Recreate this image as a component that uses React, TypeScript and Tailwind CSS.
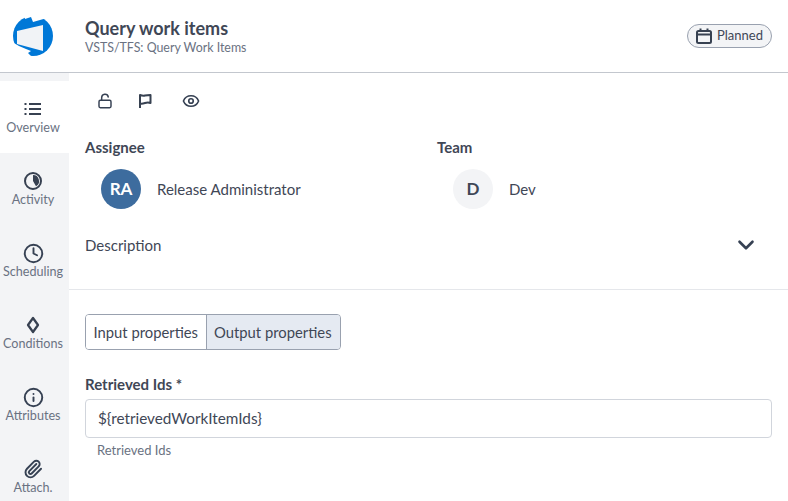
import { ChevronDown, Clock, Eye, Info, LockOpen, Paperclip } from "lucide-react";

const Logo = () => (
  <svg width="40" height="40" viewBox="0 0 40 40">
    <circle cx="20" cy="20" r="20" fill="#0078d7" />
    <path d="M-1 26 L6 30 L13 33 L18 35 L15 37 L19 41 L-1 41 Z" fill="#ffffff" />
    <path d="M11 -1 L12 3 L18 1 L20 6 L34 2 L34 -1 Z" fill="#ffffff" />
    <path d="M4 15 L30 9 L30 35 L4 28 Z" fill="#f1f3f6" />
  </svg>
);

const ListIcon = () => (
  <svg width="18" height="14" viewBox="0 0 18 14" fill="none" stroke="#374151" strokeWidth="2">
    <path d="M5 2 H17 M5 7 H17 M5 12 H17" />
    <path d="M0.5 2 H2.5 M0.5 7 H2.5 M0.5 12 H2.5" />
  </svg>
);

const PieClock = () => (
  <svg width="18" height="18" viewBox="0 0 18 18">
    <circle cx="9" cy="9" r="8" fill="none" stroke="#374151" strokeWidth="2" />
    <path d="M9 3 A6 6 0 0 1 12 14.2 L9 9 Z" fill="#374151" />
  </svg>
);

const Diamond = () => (
  <svg width="18" height="18" viewBox="0 0 18 18">
    <path d="M9 2 L14 9 L9 16 L4 9 Z" fill="none" stroke="#374151" strokeWidth="2.25" strokeLinejoin="round" />
  </svg>
);

const FlagIcon = () => (
  <svg width="14" height="16" viewBox="0 0 14 16" fill="none" stroke="#374151" strokeWidth="2" strokeLinejoin="round">
    <path d="M2 15 V2 Q5 3 7 2.5 T12.5 2 V10 Q10 9 7 10 T2 10.5" />
  </svg>
);

const CalendarIcon = () => (
  <svg width="16" height="16" viewBox="0 0 16 16" fill="none" stroke="#374151" strokeWidth="2">
    <rect x="1" y="3" width="14" height="12" rx="1.5" />
    <path d="M1 6.5 H15" />
    <path d="M4.5 0.5 V3 M11.5 0.5 V3" />
  </svg>
);

const tabs = [
  { label: "Overview", icon: <ListIcon />, active: true },
  { label: "Activity", icon: <PieClock /> },
  { label: "Scheduling", icon: <Clock size={21} strokeWidth={2.2} className="text-gray-700" /> },
  { label: "Conditions", icon: <Diamond /> },
  { label: "Attributes", icon: <Info size={21} strokeWidth={2.2} className="text-gray-700" /> },
  { label: "Attach.", icon: <Paperclip size={20} strokeWidth={2.3} className="text-gray-700" /> },
];

export default function App() {
  return (
    <div className="w-[788px] h-[501px] overflow-hidden bg-white flex flex-col font-['Lato',sans-serif] text-gray-700">
      <header className="h-[73px] shrink-0 border-b border-[#c3c7ce] flex items-center pl-[13px] pr-4">
        <Logo />
        <div className="ml-[32px] flex-1 pt-[1px]">
          <div className="text-[18px] leading-[22px] font-bold text-[#3f4756]">Query work items</div>
          <div className="text-[12.4px] leading-4 text-gray-500 mt-[1px]">VSTS/TFS: Query Work Items</div>
        </div>
        <div className="flex items-center gap-[5px] h-6 w-[85px] pl-[8px] rounded-full border border-gray-400 bg-[#f3f4f6] text-[13px] -mt-[1px]">
          <CalendarIcon />
          <span className="text-[#3f4756]">Planned</span>
        </div>
      </header>
      <div className="flex flex-1 min-h-0">
        <nav className="w-[69px] shrink-0 bg-[#f3f4f6] pt-2">
          {tabs.map((t) => (
            <div key={t.label} className={`h-[72px] flex flex-col items-center pt-[19px] pr-[3px] ${t.active ? "bg-white" : ""}`}>
              <div className="h-[18px] flex items-center">{t.icon}</div>
              <div className="text-[12.6px] leading-4 mt-[2px] text-gray-500">{t.label}</div>
            </div>
          ))}
        </nav>
        <main className="flex-1 min-w-0">
          <div className="h-[217px] border-b border-[#e5e7eb] px-4">
            <div className="flex items-center h-[64px] pl-[12px] pb-[8px] text-gray-700">
              <LockOpen size={16} strokeWidth={2.2} />
              <div className="ml-[25px]"><FlagIcon /></div>
              <Eye size={18} strokeWidth={2.2} className="ml-[30px]" />
            </div>
            <div className="flex">
              <div className="w-[352px]">
                <div className="text-[15px] leading-5 font-bold text-[#3f4756]">Assignee</div>
                <div className="flex items-center mt-3 pl-4">
                  <div className="w-10 h-10 rounded-full bg-[#3d6c9e] text-white font-bold text-[17px] flex items-center justify-center">RA</div>
                  <span className="ml-4 text-[15px] text-[#3f4756]">Release Administrator</span>
                </div>
              </div>
              <div>
                <div className="text-[15px] leading-5 font-bold text-[#3f4756]">Team</div>
                <div className="flex items-center mt-3 pl-4">
                  <div className="w-10 h-10 rounded-full bg-[#f3f4f6] text-[#3f4756] font-bold text-[17px] flex items-center justify-center">D</div>
                  <span className="ml-4 text-[15px] text-[#3f4756]">Dev</span>
                </div>
              </div>
            </div>
            <div className="flex items-center justify-between mt-[26px] h-5 pr-[13px]">
              <span className="text-[15px] text-[#3f4756]">Description</span>
              <ChevronDown size={26} strokeWidth={2.4} />
            </div>
          </div>
          <div className="px-4 pt-6">
            <div className="flex w-fit h-9 rounded border border-gray-400 text-[14.8px] text-[#3f4756] overflow-hidden">
              <div className="px-[7.5px] flex items-center bg-white">Input properties</div>
              <div className="pl-[7.5px] pr-2 flex items-center bg-[#e5eaf2] border-l border-gray-400">Output properties</div>
            </div>
            <div className="mt-[24px] text-[15px] leading-5 font-bold text-[#3f4756]">Retrieved Ids *</div>
            <div className="mt-[5px] h-[39px] rounded border border-gray-300 flex items-center px-3 text-[15.3px] text-[#3f4756]">{"${retrievedWorkItemIds}"}</div>
            <div className="mt-[4px] px-3 text-[13px] leading-4 text-gray-500">Retrieved Ids</div>
          </div>
        </main>
      </div>
    </div>
  );
}
